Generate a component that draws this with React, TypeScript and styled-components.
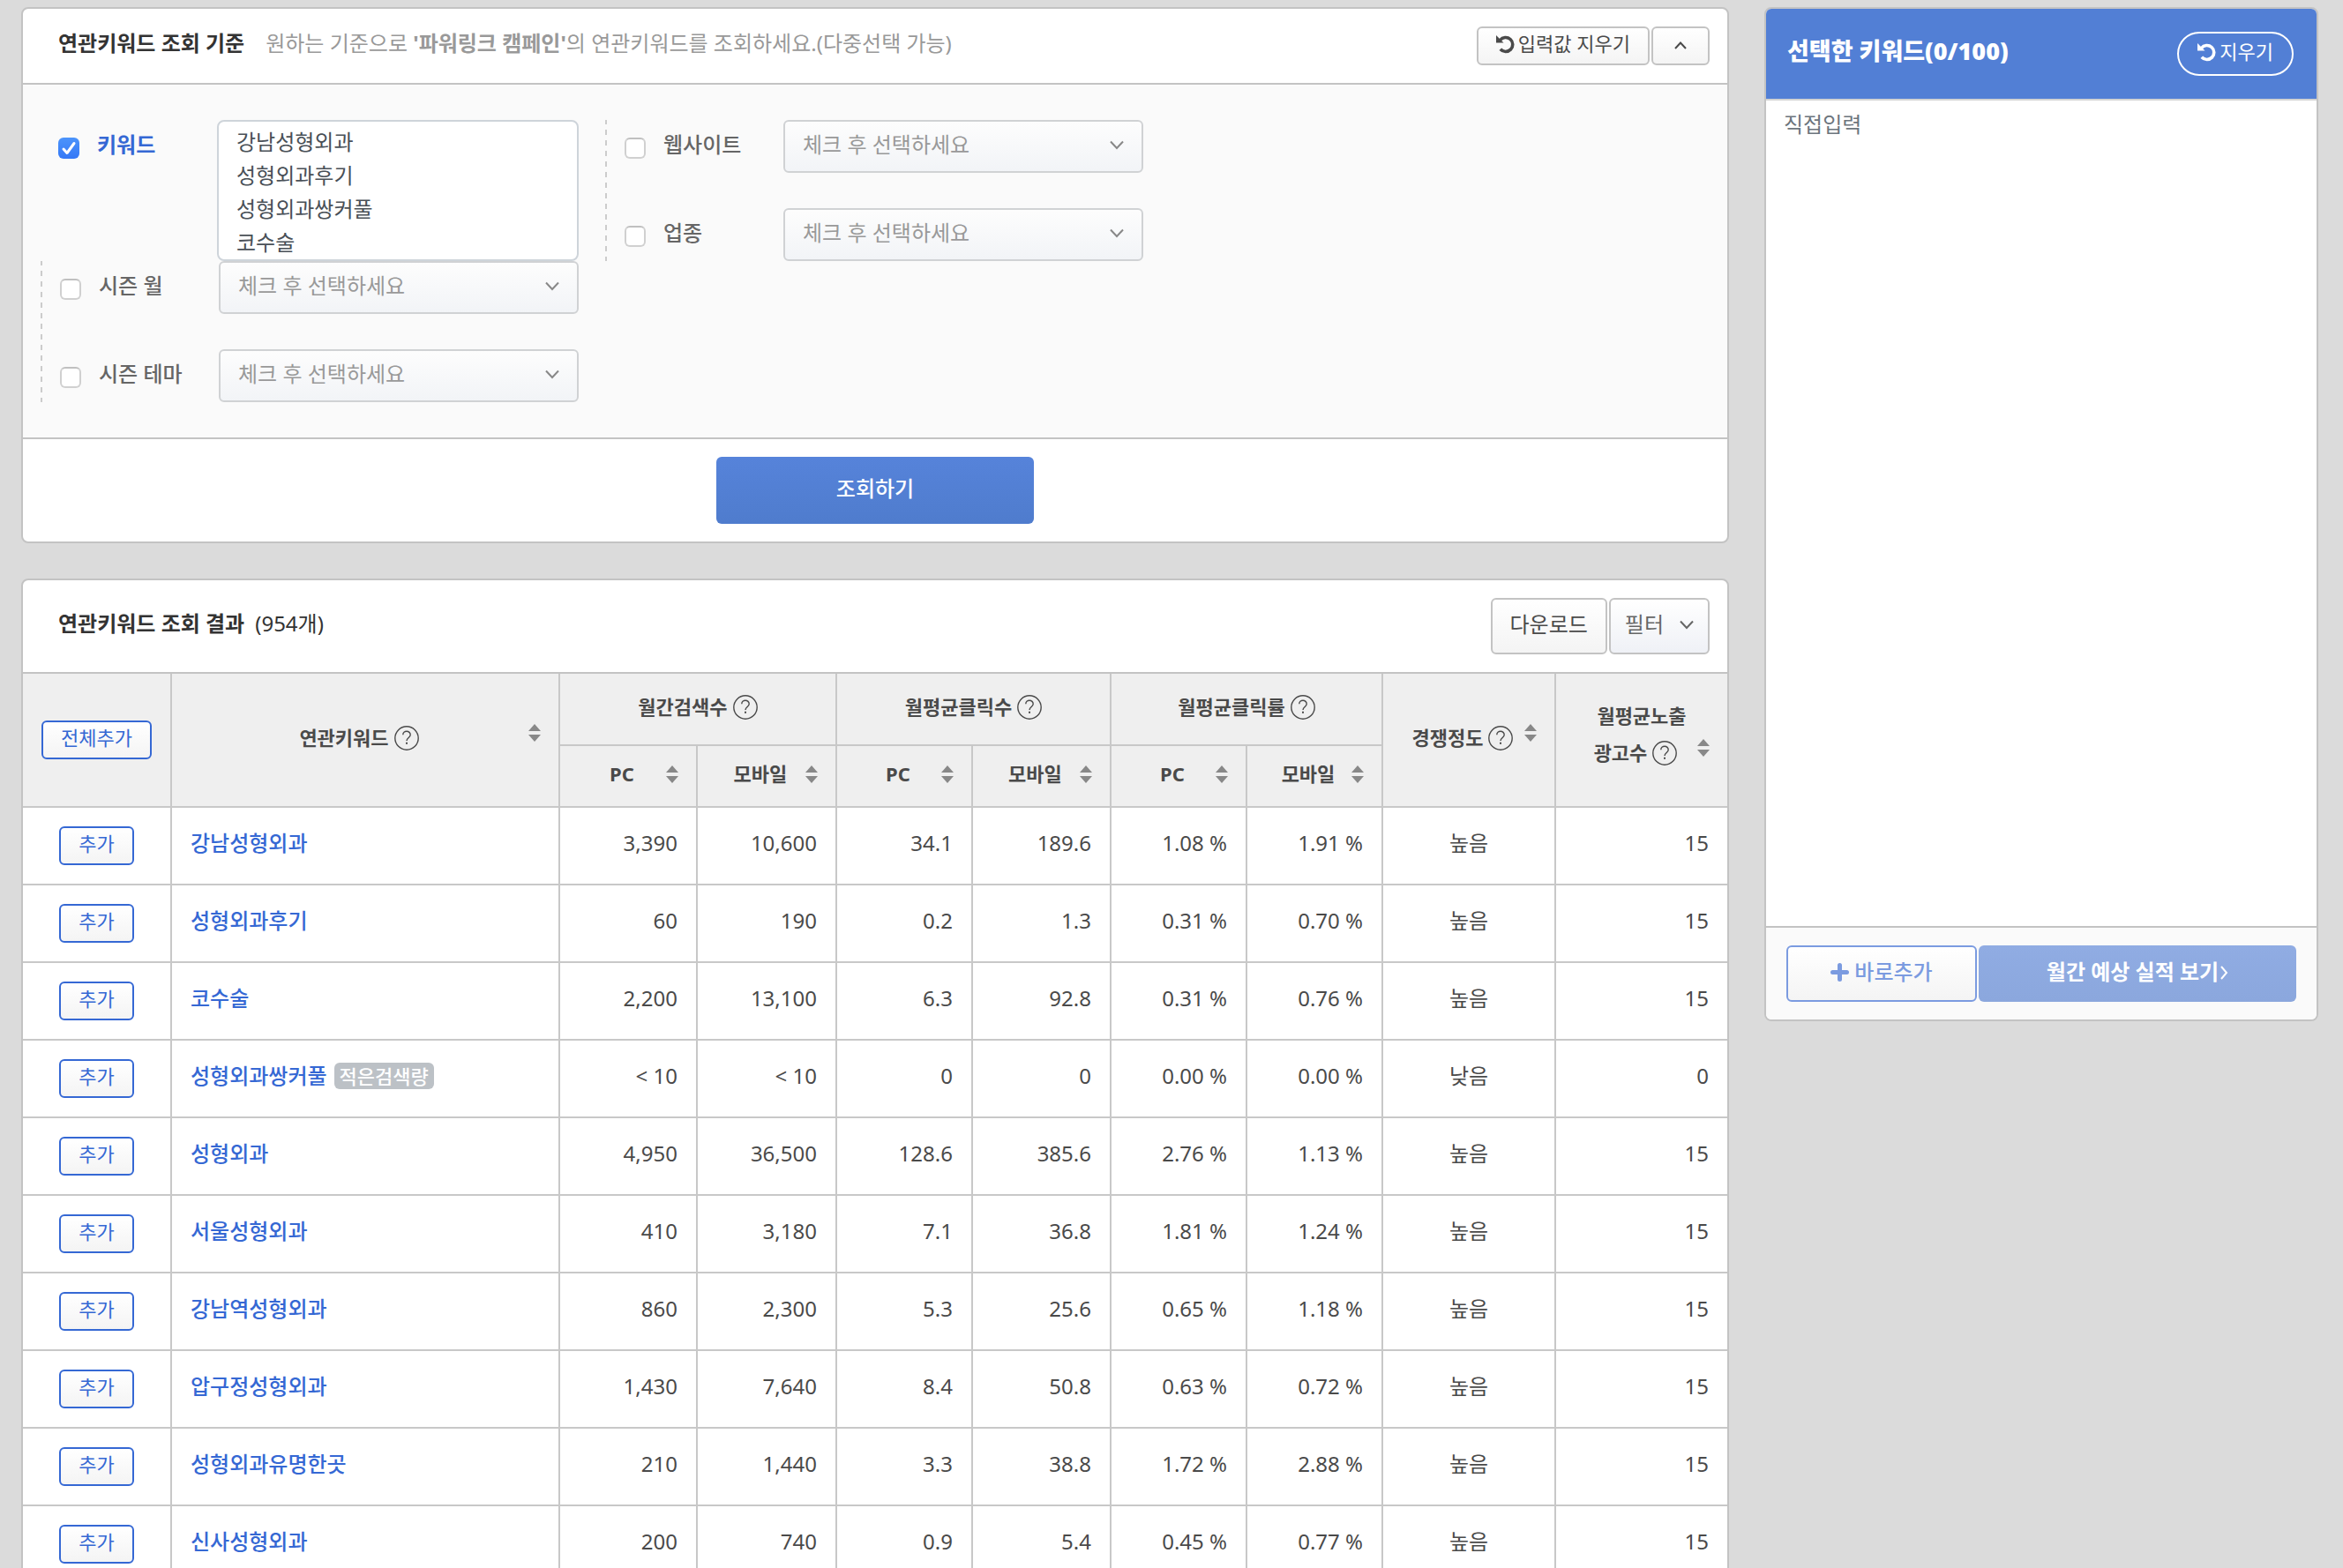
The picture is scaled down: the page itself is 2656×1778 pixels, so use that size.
import React from "react";
import styled, { createGlobalStyle, css } from "styled-components";

const line = "#c3c3c3";
const blue = "#3568d4";
const ink = "#4a4a4a";

const GlobalStyle = createGlobalStyle`
  *, *::before, *::after { box-sizing: border-box; }
  body {
    margin: 0;
    background: #dbdbdb;
    color: ${ink};
    font-family: "Noto Sans", "Noto Sans CJK KR", sans-serif;
    font-size: 24px;
    line-height: 38px;
  }
  button, select, textarea, input { font: inherit; color: inherit; margin: 0; }
  button { cursor: pointer; }
`;

const Page = styled.div`
  display: grid;
  grid-template-columns: minmax(0, 1fr) 628px;
  gap: 40px;
  align-items: start;
  height: 100vh;
  padding: 8px 28px 0 24px;
  overflow: hidden;
`;

const Main = styled.main`
  display: flex;
  flex-direction: column;
  gap: 40px;
`;

const Card = styled.section`
  border: 2px solid ${line};
  border-radius: 8px;
  background: #fff;
  overflow: hidden;
`;

const CardHeader = styled.header<{ $tall?: boolean }>`
  display: flex;
  align-items: center;
  justify-content: space-between;
  height: ${(p) => (p.$tall ? 106 : 86)}px;
  padding: 0 20px 0 40px;
  border-bottom: 2px solid ${line};
`;

const Heading = styled.div`
  display: flex;
  align-items: baseline;
  padding-bottom: 6px;
`;

const Title = styled.h2`
  margin: 0;
  color: #333;
  font-size: 24px;
  font-weight: 700;
`;

const Hint = styled.p`
  margin: 0 0 0 24px;
  color: #999;
`;

const Count = styled.span`
  margin-left: 12px;
  color: #333;
`;

const Actions = styled.div`
  display: flex;
  gap: 2px;
`;

const buttonBase = css`
  display: inline-flex;
  align-items: center;
  justify-content: center;
  border: 2px solid ${line};
  border-radius: 6px;
  background: linear-gradient(#fff, #f4f4f4);
  white-space: nowrap;
`;

const SmallButton = styled.button`
  ${buttonBase}
  gap: 4px;
  height: 44px;
  padding: 0 20px 6px;
  font-size: 22px;
  font-weight: 400;
`;

const ToggleButton = styled(SmallButton)`
  padding: 0 23px;
`;

const LargeButton = styled.button`
  ${buttonBase}
  gap: 18px;
  height: 64px;
  padding: 0 20px 4px;
`;

const FilterButton = styled(LargeButton)`
  padding: 0 16px 4px;
  background: linear-gradient(#fff, #eff1f6);
  color: #666;
`;

const OutlineButton = styled(SmallButton)`
  border-color: ${blue};
  color: ${blue};
`;

const Criteria = styled.div`
  display: grid;
  grid-template-columns: repeat(2, 640px);
  padding: 40px 20px;
  border-bottom: 2px solid ${line};
  background: #fafafa;
`;

const Group = styled.div<{ $divided?: boolean }>`
  display: flex;
  flex-direction: column;
  gap: 40px;
  padding: 0 30px 0 ${(p) => (p.$divided ? 22 : 20)}px;
  ${(p) =>
    p.$divided &&
    css`
      background: repeating-linear-gradient(#ccc 0 5px, transparent 5px 11px, #ccc 11px 12px) left / 2px 100% no-repeat;
    `}
`;

const Field = styled.div`
  display: grid;
  grid-template-columns: 24px 116px minmax(0, 1fr);
  column-gap: 20px;
  align-items: start;
`;

const Check = styled.input`
  appearance: none;
  width: 24px;
  height: 24px;
  margin-top: 20px !important;
  border: 2px solid #d0d0d0;
  border-top-color: #c0c0c0;
  border-radius: 6px;
  background: #fff;
  &:checked {
    border: 0;
    background: url("data:image/svg+xml,%3Csvg xmlns='http://www.w3.org/2000/svg' viewBox='0 0 24 24'%3E%3Cpath d='M6 13l4 4.500L18 6.500' fill='none' stroke='white' stroke-width='3' stroke-linecap='round' stroke-linejoin='round'/%3E%3C/svg%3E"),
      linear-gradient(#4c94fb, #3478f6);
  }
`;

const FieldLabel = styled.label<{ $active?: boolean }>`
  padding-top: 9px;
  color: ${(p) => (p.$active ? blue : "#666")};
  font-weight: ${(p) => (p.$active ? 700 : 500)};
`;

const KeywordBox = styled.textarea`
  display: block;
  width: 100%;
  height: 160px;
  padding: 4px 20px;
  border: 2px solid #ced4da;
  border-radius: 8px;
  background: #fff;
  color: #495057 !important;
  resize: none;
  overflow: hidden;
`;

const SelectWrap = styled.div`
  position: relative;
`;

const Select = styled.select`
  appearance: none;
  display: block;
  width: 100%;
  height: 60px;
  padding: 0 60px 4px 20px;
  border: 2px solid #d0d2d4;
  border-radius: 6px;
  background: linear-gradient(#fdfdfd, #f2f4f7);
  color: #999 !important;
  opacity: 1;
`;

const SelectArrow = styled.span`
  position: absolute;
  top: 20px;
  right: 22px;
  display: flex;
  color: #888;
  pointer-events: none;
`;

const SubmitBar = styled.div`
  display: flex;
  justify-content: center;
  padding: 20px;
`;

const SubmitButton = styled.button`
  width: 360px;
  height: 76px;
  padding: 0 0 4px;
  border: 0;
  border-radius: 6px;
  background: linear-gradient(#5683da, #4f7ccd);
  color: #fff !important;
  font-weight: 500;
`;

const Table = styled.table`
  width: 100%;
  table-layout: fixed;
  border-collapse: separate;
  border-spacing: 0;
`;

const Th = styled.th`
  padding: 0 20px;
  border: solid #c8c8c8;
  border-width: 0 2px 2px 0;
  background: #efefef;
  font-size: 22px;
  font-weight: 700;
  &.last { border-right: 0; }
`;

const HeadRow = styled.tr<{ $height: number }>`
  height: ${(p) => p.$height}px;
`;

const HeadCell = styled.div`
  display: flex;
  align-items: center;
`;

const HeadLabel = styled.span`
  display: flex;
  flex: 1;
  align-items: center;
  justify-content: center;
  gap: 6px;
  padding-bottom: 6px;
  white-space: nowrap;
`;

const HeadLines = styled.div`
  display: flex;
  flex-direction: column;
  line-height: 42px;
  padding-bottom: 8px;
  white-space: nowrap;
`;

const HelpButton = styled.button`
  display: inline-flex;
  padding: 2px 0 0;
  border: 0;
  background: none;
`;

const SortButton = styled.button<{ $raised?: boolean }>`
  display: inline-flex;
  padding: 0 0 ${(p) => (p.$raised ? 16 : 4)}px;
  border: 0;
  background: none;
  color: #888 !important;
`;

const Td = styled.td<{ $align?: string }>`
  height: 88px;
  padding: 0 21px 6px;
  border: solid #c8c8c8;
  border-width: 0 2px 2px 0;
  text-align: ${(p) => p.$align ?? "right"};
  white-space: nowrap;
  &:last-child { border-right: 0; }
`;

const ActionTd = styled(Td)`
  padding: 0;
  line-height: 0;
  & > button { line-height: 38px; }
`;

const KeywordLink = styled.a`
  color: ${blue};
  font-weight: 500;
  text-decoration: none;
`;

const LowBadge = styled.span`
  display: inline-block;
  margin-left: 8px;
  padding: 0 6px;
  border-radius: 6px;
  background: #bcc1c6;
  color: #fff;
  font-size: 22px;
  font-weight: 500;
  line-height: 30px;
`;

const PanelHeader = styled.header`
  display: flex;
  align-items: center;
  justify-content: space-between;
  height: 104px;
  padding: 0 26px 0 24px;
  border-bottom: 2px solid #d3d3d3;
  background: #527fd5;
  color: #fff;
`;

const PanelTitle = styled.h2`
  margin: 0;
  padding-bottom: 6px;
  font-size: 27px;
  font-weight: 900;
`;

const PillButton = styled.button`
  display: inline-flex;
  align-items: center;
  gap: 4px;
  height: 50px;
  padding: 0 21px 6px;
  border: 2px solid #fff;
  border-radius: 25px;
  background: none;
  color: #fff !important;
  font-size: 22px !important;
`;

const DirectInput = styled.textarea`
  display: block;
  width: 100%;
  height: 936px;
  padding: 8px 20px;
  border: 0;
  resize: none;
  &::placeholder { color: #6c757d; opacity: 1; }
`;

const PanelFooter = styled.footer`
  display: grid;
  grid-template-columns: 216px minmax(0, 1fr);
  gap: 2px;
  padding: 20px 23px;
  border-top: 2px solid ${line};
  background: #fafafa;
`;

const AddNowButton = styled(LargeButton)`
  gap: 6px;
  border-color: #7b9be0;
  color: #7b9be0 !important;
  font-weight: 500;
`;

const EstimateButton = styled(LargeButton)`
  gap: 2px;
  border: 0;
  background: linear-gradient(#90ace3, #8ba7dd);
  color: #fff !important;
  font-weight: 700 !important;
`;

const IconSlot = styled.span`
  display: inline-flex;
  padding-top: 2px;
`;

const UndoIcon = () => (
  <IconSlot>
    <svg width="21" height="22" viewBox="0 0 21 22" fill="none" aria-hidden="true">
      <path d="M4.500 6.500A8 8 0 1 1 4.800 16.800" stroke="currentColor" strokeWidth="3.600" />
      <path d="M0 1v8.500h8.500z" fill="currentColor" />
    </svg>
  </IconSlot>
);

const Chevron = ({ up }: { up?: boolean }) => (
  <svg width="16" height="16" viewBox="0 0 16 16" fill="none" stroke="currentColor" strokeWidth="2" aria-hidden="true">
    <path d={up ? "M2 11L8 4.500l6 6.500" : "M1 4.500l7 7.500 7-7.500"} />
  </svg>
);

const Help = ({ about }: { about: string }) => (
  <HelpButton type="button" aria-label={about}>
    <svg width="28" height="28" viewBox="0 0 28 28" fill="none" stroke="currentColor" strokeWidth="1.400" aria-hidden="true">
      <circle cx="14" cy="14" r="13.200" />
      <path d="M9.800 10.200a4.200 4 0 1 1 8.400 0c0 3-4.200 3.500-4.200 6.800" />
      <path d="M14 18.800v2" strokeWidth="2" />
    </svg>
  </HelpButton>
);

const Sort = ({ about, raised }: { about: string; raised?: boolean }) => (
  <SortButton type="button" aria-label={about} $raised={raised}>
    <svg width="14" height="20" viewBox="0 0 14 20" fill="currentColor" aria-hidden="true">
      <path d="M7 0l7 8H0zM7 20l7-8H0z" />
    </svg>
  </SortButton>
);

const PlusIcon = () => (
  <svg width="21" height="21" viewBox="0 0 21 21" fill="none" stroke="currentColor" strokeWidth="5" strokeLinecap="round" aria-hidden="true">
    <path d="M10.500 2.500v16M2.500 10.500h16" />
  </svg>
);

const RightIcon = () => (
  <IconSlot>
    <svg width="9" height="16" viewBox="0 0 9 16" fill="none" stroke="currentColor" strokeWidth="2" aria-hidden="true">
      <path d="M1 1l6 7-6 7" />
    </svg>
  </IconSlot>
);

const SelectField = ({ id, label }: { id: string; label: string }) => (
  <Field>
    <Check type="checkbox" id={id} />
    <FieldLabel htmlFor={id}>{label}</FieldLabel>
    <SelectWrap>
      <Select aria-label={label} disabled>
        <option>체크 후 선택하세요</option>
      </Select>
      <SelectArrow>
        <Chevron />
      </SelectArrow>
    </SelectWrap>
  </Field>
);

type Row = { keyword: string; low?: boolean; values: string[]; level: string; ads: string };

const rows: Row[] = [
  { keyword: "강남성형외과", values: ["3,390", "10,600", "34.1", "189.6", "1.08 %", "1.91 %"], level: "높음", ads: "15" },
  { keyword: "성형외과후기", values: ["60", "190", "0.2", "1.3", "0.31 %", "0.70 %"], level: "높음", ads: "15" },
  { keyword: "코수술", values: ["2,200", "13,100", "6.3", "92.8", "0.31 %", "0.76 %"], level: "높음", ads: "15" },
  { keyword: "성형외과쌍커풀", low: true, values: ["< 10", "< 10", "0", "0", "0.00 %", "0.00 %"], level: "낮음", ads: "0" },
  { keyword: "성형외과", values: ["4,950", "36,500", "128.6", "385.6", "2.76 %", "1.13 %"], level: "높음", ads: "15" },
  { keyword: "서울성형외과", values: ["410", "3,180", "7.1", "36.8", "1.81 %", "1.24 %"], level: "높음", ads: "15" },
  { keyword: "강남역성형외과", values: ["860", "2,300", "5.3", "25.6", "0.65 %", "1.18 %"], level: "높음", ads: "15" },
  { keyword: "압구정성형외과", values: ["1,430", "7,640", "8.4", "50.8", "0.63 %", "0.72 %"], level: "높음", ads: "15" },
  { keyword: "성형외과유명한곳", values: ["210", "1,440", "3.3", "38.8", "1.72 %", "2.88 %"], level: "높음", ads: "15" },
  { keyword: "신사성형외과", values: ["200", "740", "0.9", "5.4", "0.45 %", "0.77 %"], level: "높음", ads: "15" },
];

const columns = [169, undefined, 156, 158, 154, 157, 154, 154, 196, 194];
const groups = ["월간검색수", "월평균클릭수", "월평균클릭률"];

export default function App() {
  return (
    <>
      <GlobalStyle />
      <Page>
        <Main>
          <Card>
            <CardHeader>
              <Heading>
                <Title>연관키워드 조회 기준</Title>
                <Hint>
                  원하는 기준으로 <b>'파워링크 캠페인'</b>의 연관키워드를 조회하세요.(다중선택 가능)
                </Hint>
              </Heading>
              <Actions>
                <SmallButton type="button">
                  <UndoIcon />
                  입력값 지우기
                </SmallButton>
                <ToggleButton type="button" aria-label="접기">
                  <Chevron up />
                </ToggleButton>
              </Actions>
            </CardHeader>
            <Criteria>
              <Group>
                <Field>
                  <Check type="checkbox" id="keyword" defaultChecked />
                  <FieldLabel htmlFor="keyword" $active>
                    키워드
                  </FieldLabel>
                  <KeywordBox aria-label="키워드" defaultValue={"강남성형외과\n성형외과후기\n성형외과쌍커풀\n코수술"} />
                </Field>
              </Group>
              <Group $divided>
                <SelectField id="website" label="웹사이트" />
                <SelectField id="business" label="업종" />
              </Group>
              <Group $divided>
                <SelectField id="month" label="시즌 월" />
                <SelectField id="theme" label="시즌 테마" />
              </Group>
            </Criteria>
            <SubmitBar>
              <SubmitButton type="button">조회하기</SubmitButton>
            </SubmitBar>
          </Card>

          <Card>
            <CardHeader $tall>
              <Heading>
                <Title>연관키워드 조회 결과</Title>
                <Count>(954개)</Count>
              </Heading>
              <Actions>
                <LargeButton type="button">다운로드</LargeButton>
                <FilterButton type="button">
                  필터
                  <Chevron />
                </FilterButton>
              </Actions>
            </CardHeader>
            <Table>
              <colgroup>
                {columns.map((width, i) => (
                  <col key={i} style={{ width }} />
                ))}
              </colgroup>
              <thead>
                <HeadRow $height={82}>
                  <Th rowSpan={2}>
                    <OutlineButton type="button">전체추가</OutlineButton>
                  </Th>
                  <Th rowSpan={2}>
                    <HeadCell>
                      <HeadLabel>
                        연관키워드
                        <Help about="연관키워드 도움말" />
                      </HeadLabel>
                      <Sort about="연관키워드 정렬" raised />
                    </HeadCell>
                  </Th>
                  {groups.map((group) => (
                    <Th key={group} colSpan={2}>
                      <HeadLabel>
                        {group}
                        <Help about={`${group} 도움말`} />
                      </HeadLabel>
                    </Th>
                  ))}
                  <Th rowSpan={2}>
                    <HeadCell>
                      <HeadLabel>
                        경쟁정도
                        <Help about="경쟁정도 도움말" />
                      </HeadLabel>
                      <Sort about="경쟁정도 정렬" raised />
                    </HeadCell>
                  </Th>
                  <Th rowSpan={2} className="last">
                    <HeadLines>
                      <span>월평균노출</span>
                      <HeadCell>
                        <HeadLabel>
                          광고수
                          <Help about="월평균노출 광고수 도움말" />
                        </HeadLabel>
                        <Sort about="월평균노출 광고수 정렬" raised />
                      </HeadCell>
                    </HeadLines>
                  </Th>
                </HeadRow>
                <HeadRow $height={70}>
                  {groups.flatMap((group) =>
                    ["PC", "모바일"].map((device) => (
                      <Th key={group + device}>
                        <HeadCell>
                          <HeadLabel>{device}</HeadLabel>
                          <Sort about={`${group} ${device} 정렬`} />
                        </HeadCell>
                      </Th>
                    )),
                  )}
                </HeadRow>
              </thead>
              <tbody>
                {rows.map((row) => (
                  <tr key={row.keyword}>
                    <ActionTd $align="center">
                      <OutlineButton type="button">추가</OutlineButton>
                    </ActionTd>
                    <Td $align="left">
                      <KeywordLink href="#">{row.keyword}</KeywordLink>
                      {row.low && <LowBadge>적은검색량</LowBadge>}
                    </Td>
                    {row.values.map((value, i) => (
                      <Td key={i}>{value}</Td>
                    ))}
                    <Td $align="center">{row.level}</Td>
                    <Td>{row.ads}</Td>
                  </tr>
                ))}
              </tbody>
            </Table>
          </Card>
        </Main>

        <Card as="aside">
          <PanelHeader>
            <PanelTitle>선택한 키워드(0/100)</PanelTitle>
            <PillButton type="button">
              <UndoIcon />
              지우기
            </PillButton>
          </PanelHeader>
          <DirectInput aria-label="직접입력" placeholder="직접입력" />
          <PanelFooter>
            <AddNowButton type="button">
              <PlusIcon />
              바로추가
            </AddNowButton>
            <EstimateButton type="button">
              월간 예상 실적 보기
              <RightIcon />
            </EstimateButton>
          </PanelFooter>
        </Card>
      </Page>
    </>
  );
}
